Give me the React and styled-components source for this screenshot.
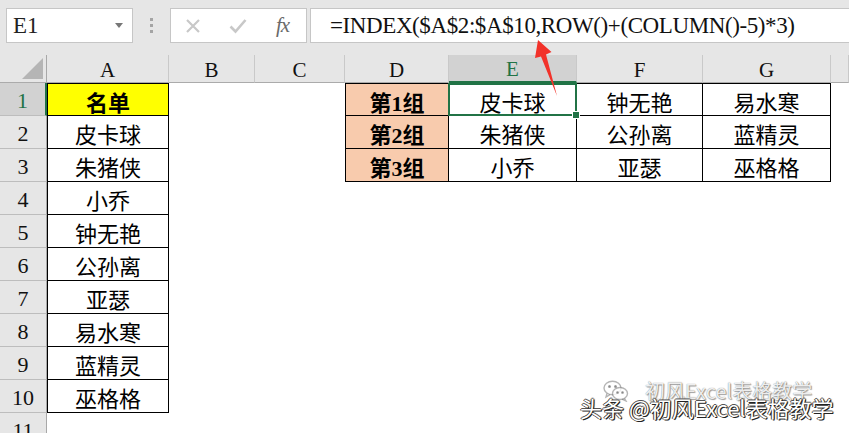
import React from "react";
import styled, { createGlobalStyle, css } from "styled-components";

const GlobalStyle = createGlobalStyle`
  html, body {
    margin: 0;
    padding: 0;
    background: #e6e6e6;
  }
`;

const Page = styled.div`
  position: relative;
  width: 849px;
  height: 433px;
  overflow: hidden;
  display: flex;
  flex-direction: column;
  background: #e6e6e6;
`;

const Toolbar = styled.div`
  height: 55px;
  flex: none;
  display: flex;
  align-items: flex-start;
  padding: 8px 0 0 6px;
  box-sizing: border-box;
`;

const Box = styled.div`
  height: 35px;
  box-sizing: border-box;
  background: #fff;
  border: 1px solid #c6c6c6;
  display: flex;
  align-items: center;
`;

const NameBox = styled(Box)`
  width: 127px;
  padding: 0 9px 0 6px;
  font-family: "Liberation Serif", serif;
  font-size: 23px;
  color: #222;
`;

const Caret = styled.span`
  margin-left: auto;
  width: 0;
  height: 0;
  border-left: 4px solid transparent;
  border-right: 4px solid transparent;
  border-top: 5px solid #777;
`;

const Grip = styled.div`
  width: 37px;
  padding-top: 10px;
  display: flex;
  flex-direction: column;
  align-items: center;
  gap: 3px;
  span {
    width: 3px;
    height: 3px;
    background: #a4a4a4;
  }
`;

const FuncBox = styled(Box)`
  width: 137px;
  padding: 0 0 0 14px;
  gap: 28px;
`;

const Fx = styled.span`
  font-family: "Liberation Serif", serif;
  font-style: italic;
  font-size: 21px;
  color: #6a6a6a;
  margin-left: 1px;
  letter-spacing: -1px;
`;

const FormulaBox = styled(Box)`
  flex: 1;
  margin: 0 -2px 0 3px;
  padding-left: 19px;
  font-family: "Liberation Serif", serif;
  font-size: 23px;
  letter-spacing: -0.4px;
  color: #111;
  white-space: nowrap;
`;

const Sheet = styled.div`
  display: grid;
  grid-template-columns: 47px 122px 86px 90px 104px 128px 126px 128px 1fr;
  grid-template-rows: 28px;
  grid-auto-rows: 33px;
  background: #fff;
`;

const Corner = styled.div`
  background: #e6e6e6;
  border-right: 1px solid #a8a8a8;
  border-bottom: 1px solid #ababab;
  display: flex;
  align-items: flex-end;
  justify-content: flex-end;
  padding: 0 3px 3px 0;
  span {
    width: 21px;
    height: 21px;
    background: #b5b5b5;
    clip-path: polygon(100% 0, 100% 100%, 0 100%);
  }
`;

const ColHead = styled.div`
  background: ${(p) => (p.$active ? "#d2d2d2" : "#e6e6e6")};
  color: ${(p) => (p.$active ? "#217346" : "#111")};
  border-right: 1px solid #c9c9c9;
  border-bottom: ${(p) => (p.$active ? "2px solid #217346" : "1px solid #ababab")};
  box-sizing: border-box;
  display: flex;
  align-items: center;
  justify-content: center;
  padding-top: 3px;
  font-family: "Liberation Serif", serif;
  font-size: 21px;
`;

const RowHead = styled.div`
  background: ${(p) => (p.$active ? "#d2d2d2" : "#e6e6e6")};
  color: ${(p) => (p.$active ? "#217346" : "#111")};
  border-bottom: 1px solid #bdbdbd;
  border-right: ${(p) => (p.$active ? "2px solid #217346" : "1px solid #a8a8a8")};
  box-sizing: border-box;
  display: flex;
  align-items: center;
  justify-content: center;
  padding-top: 4px;
  font-family: "Liberation Serif", serif;
  font-size: 22px;
`;

const Cell = styled.div`
  position: relative;
  box-sizing: border-box;
  display: flex;
  align-items: center;
  justify-content: center;
  padding-top: 2px;
  background: ${(p) => p.$bg || "#fff"};
  font-family: "Liberation Serif", "Noto Sans CJK SC", serif;
  font-size: 22px;
  font-weight: ${(p) => (p.$bold ? 700 : 400)};
  color: #000;
  white-space: nowrap;
  ${(p) =>
    p.$box &&
    css`
      border-right: 1px solid #000;
      border-bottom: 1px solid #000;
    `}
  ${(p) => p.$box && p.$left && css`border-left: 1px solid #000;`}
  ${(p) => p.$box && p.$top && css`border-top: 1px solid #000;`}
`;

const Selection = styled.div`
  position: absolute;
  inset: -1px -1px -1px -1px;
  border: 2px solid #217346;
  z-index: 2;
  &::after {
    content: "";
    position: absolute;
    right: -5px;
    bottom: -5px;
    width: 6px;
    height: 6px;
    background: #217346;
    border: 1px solid #fff;
  }
`;

const Overlay = styled.svg`
  position: absolute;
  left: 0;
  top: 0;
  pointer-events: none;
  z-index: 5;
`;

const Watermark = styled.div`
  position: absolute;
  left: 580px;
  top: 394px;
  z-index: 6;
  font-family: "Noto Sans CJK SC", "Liberation Sans", sans-serif;
  font-size: 22px;
  line-height: 26px;
  color: #fff;
  white-space: nowrap;
  text-shadow: 1px 1px 0 #222, -1px 0 0 #444, 0 -1px 0 #555, 1px 0 1px #222;
`;

const GhostMark = styled.div`
  position: absolute;
  left: 603px;
  top: 379px;
  z-index: 4;
  display: flex;
  align-items: center;
  gap: 16px;
  font-family: "Noto Sans CJK SC", "Liberation Sans", sans-serif;
  font-size: 20px;
  line-height: 24px;
  color: rgba(255, 255, 255, 0.9);
  white-space: nowrap;
  text-shadow: 0 0 1px rgba(0, 0, 0, 0.55), 1px 1px 1px rgba(0, 0, 0, 0.35);
`;

const PEACH = "#f8cbad";
const names = ["皮卡球", "朱猪侠", "小乔", "钟无艳", "公孙离", "亚瑟", "易水寒", "蓝精灵", "巫格格"];
const groups = [
  ["皮卡球", "钟无艳", "易水寒"],
  ["朱猪侠", "公孙离", "蓝精灵"],
  ["小乔", "亚瑟", "巫格格"],
];
const cols = ["A", "B", "C", "D", "E", "F", "G", ""];

function cellsFor(r) {
  const cells = Array(8).fill(null).map(() => ({}));
  if (r === 1) cells[0] = { t: "名单", bg: "#ffff00", bold: true, box: true, left: true, top: true };
  else if (r <= 10) cells[0] = { t: names[r - 2], box: true, left: true };
  if (r <= 3) {
    cells[3] = { t: `第${r}组`, bg: PEACH, bold: true, box: true, left: true, top: r === 1 };
    groups[r - 1].forEach((t, i) => {
      cells[4 + i] = { t, box: true, top: r === 1, selected: r === 1 && i === 0 };
    });
  }
  return cells;
}

function WeChatIcon() {
  return (
    <svg width="26" height="22" viewBox="0 0 26 22" fill="none" stroke="rgba(90,90,90,0.45)" strokeWidth="1.4">
      <ellipse cx="9.5" cy="8" rx="8.5" ry="6.8" fill="rgba(255,255,255,0.8)" />
      <path d="M4 13.5 L3 17 L7 14.6" />
      <ellipse cx="17" cy="13.5" rx="7.5" ry="6" fill="rgba(255,255,255,0.8)" />
      <path d="M21.5 18.5 L23 21 L19 19.2" />
      <circle cx="6.5" cy="6.5" r="0.9" fill="rgba(90,90,90,0.5)" />
      <circle cx="12.5" cy="6.5" r="0.9" fill="rgba(90,90,90,0.5)" />
      <circle cx="14.5" cy="12.5" r="0.8" fill="rgba(90,90,90,0.5)" />
      <circle cx="19.5" cy="12.5" r="0.8" fill="rgba(90,90,90,0.5)" />
    </svg>
  );
}

export default function App() {
  const rows = Array.from({ length: 11 }, (_, i) => i + 1);
  return (
    <Page>
      <GlobalStyle />
      <Toolbar>
        <NameBox>
          E1
          <Caret />
        </NameBox>
        <Grip>
          <span />
          <span />
          <span />
        </Grip>
        <FuncBox>
          <svg width="16" height="16" viewBox="0 0 16 16" stroke="#c8c8c8" strokeWidth="2.2">
            <path d="M2 2 L14 14 M14 2 L2 14" />
          </svg>
          <svg width="18" height="16" viewBox="0 0 18 16" fill="none" stroke="#c8c8c8" strokeWidth="2.6">
            <path d="M1.5 8.5 L6.5 13.5 L16.5 2" />
          </svg>
          <Fx>fx</Fx>
        </FuncBox>
        <FormulaBox>=INDEX($A$2:$A$10,ROW()+(COLUMN()-5)*3)</FormulaBox>
      </Toolbar>

      <Sheet>
        <Corner>
          <span />
        </Corner>
        {cols.map((c, i) => (
          <ColHead key={i} $active={c === "E"}>
            {c}
          </ColHead>
        ))}
        {rows.map((r) => (
          <React.Fragment key={r}>
            <RowHead $active={r === 1}>{r}</RowHead>
            {cellsFor(r).map((c, i) => (
              <Cell key={i} $bg={c.bg} $bold={c.bold} $box={c.box} $left={c.left} $top={c.top}>
                {c.t}
                {c.selected && <Selection />}
              </Cell>
            ))}
          </React.Fragment>
        ))}
      </Sheet>

      <Overlay width="849" height="433">
        <polygon
          points="538,40 551.5,52 546,54.5 557,96 541,56.5 535,58"
          fill="#f2322a"
        />
      </Overlay>

      <GhostMark>
        <WeChatIcon />
        <span>初风Excel表格教学</span>
      </GhostMark>
      <Watermark>头条 @初风Excel表格教学</Watermark>
    </Page>
  );
}
